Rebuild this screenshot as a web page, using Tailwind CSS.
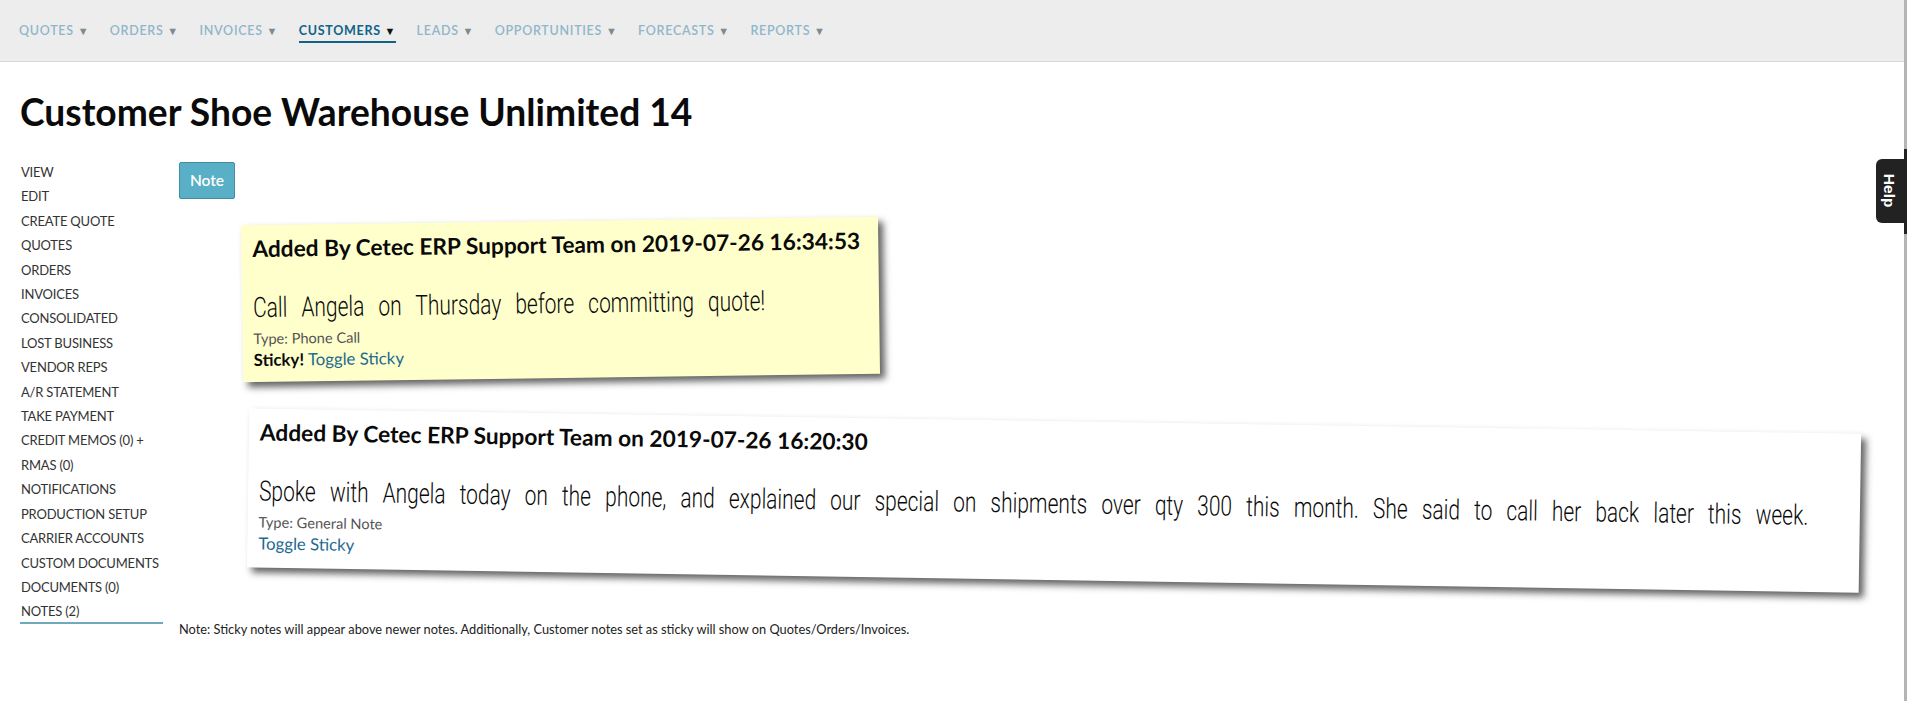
<!DOCTYPE html>
<html lang="en">
<head>
  <meta charset="UTF-8" />
  <meta name="viewport" content="width=device-width, initial-scale=1.0" />
  <title>Customer Shoe Warehouse Unlimited 14</title>
  <script src="https://cdn.jsdelivr.net/npm/@tailwindcss/browser@4"></script>
</head>
<body class="bg-white text-[#0a0a0a] font-['Lato','Noto_Sans',sans-serif] h-[701px] overflow-hidden relative">

  <header class="h-[62px] bg-[#ededed] border-b border-[#d8d8d8] flex items-start gap-[20.5px] pl-[19px] pt-[22px] text-[12.5px] font-semibold tracking-[0.72px] text-[#8fb6ca]">
    <a class="h-[21px]">QUOTES <span class="text-[#7d8a92] text-[11px]">▼</span></a>
    <a class="h-[21px]">ORDERS <span class="text-[#7d8a92] text-[11px]">▼</span></a>
    <a class="h-[21px]">INVOICES <span class="text-[#7d8a92] text-[11px]">▼</span></a>
    <a class="h-[21px] text-[#0f6488] font-bold border-b-2 border-[#0f6488]">CUSTOMERS <span class="text-[#111] text-[11px]">▼</span></a>
    <a class="h-[21px]">LEADS <span class="text-[#7d8a92] text-[11px]">▼</span></a>
    <a class="h-[21px]">OPPORTUNITIES <span class="text-[#7d8a92] text-[11px]">▼</span></a>
    <a class="h-[21px]">FORECASTS <span class="text-[#7d8a92] text-[11px]">▼</span></a>
    <a class="h-[21px]">REPORTS <span class="text-[#7d8a92] text-[11px]">▼</span></a>
  </header>

  <h1 class="ml-[20px] mt-[27px] text-[37.2px] leading-[46px] font-bold">Customer Shoe Warehouse Unlimited 14</h1>

  <div class="flex mt-[27px] ml-[20px]">
    <nav class="w-[163px] shrink-0 flex flex-col text-[13px] tracking-[-0.2px] leading-[24.4px] text-[#333] mt-[-2px] whitespace-nowrap">
      <a class="pl-px">VIEW</a>
      <a class="pl-px">EDIT</a>
      <a class="pl-px">CREATE QUOTE</a>
      <a class="pl-px">QUOTES</a>
      <a class="pl-px">ORDERS</a>
      <a class="pl-px">INVOICES</a>
      <a class="pl-px">CONSOLIDATED</a>
      <a class="pl-px">LOST BUSINESS</a>
      <a class="pl-px">VENDOR REPS</a>
      <a class="pl-px">A/R STATEMENT</a>
      <a class="pl-px">TAKE PAYMENT</a>
      <a class="pl-px">CREDIT MEMOS (0) +</a>
      <a class="pl-px">RMAS (0)</a>
      <a class="pl-px">NOTIFICATIONS</a>
      <a class="pl-px">PRODUCTION SETUP</a>
      <a class="pl-px">CARRIER ACCOUNTS</a>
      <a class="pl-px">CUSTOM DOCUMENTS</a>
      <a class="pl-px">DOCUMENTS (0)</a>
      <a class="pl-px border-b-2 border-[#6fa9bd] h-[25px] w-[143px]">NOTES (2)</a>
    </nav>

    <main class="ml-[-4px] flex-1 flex flex-col items-start">
      <button class="w-[56px] h-[37px] bg-[#58afc6] border border-[#3f8ea6] rounded-[2px] text-white text-[15.5px] font-semibold">Note</button>

      <section class="ml-[63px] mt-[22px] w-[637px] h-[157px] bg-[#ffffcc] rotate-[-0.76deg] shadow-[5px_5px_7px_rgba(33,33,33,0.7)] pl-[11px] pt-[8px]">
        <h3 class="text-[22.7px] leading-[32px] font-bold">Added By Cetec ERP Support Team on 2019-07-26 16:34:53</h3>
        <p class="mt-[27px] h-[36px] text-[28px] leading-[32px] font-['Roboto',sans-serif] font-light [word-spacing:12px] whitespace-nowrap origin-left scale-x-[0.748]">Call Angela on Thursday before committing quote!</p>
        <p class="text-[14.6px] leading-[21px] text-[#555]">Type: Phone Call</p>
        <p class="text-[16.8px] leading-[21px]"><b>Sticky!</b> <a class="text-[#1d6a8f]">Toggle Sticky</a></p>
      </section>

      <section class="ml-[69px] mt-[43px] w-[1612px] h-[159px] bg-white rotate-[0.9deg] shadow-[5px_5px_7px_rgba(33,33,33,0.7)] pl-[11px] pt-[8px]">
        <h3 class="text-[22.7px] leading-[32px] font-bold">Added By Cetec ERP Support Team on 2019-07-26 16:20:30</h3>
        <p class="mt-[27px] h-[36px] text-[28px] leading-[32px] font-['Roboto',sans-serif] font-light [word-spacing:12px] whitespace-nowrap origin-left scale-x-[0.748]">Spoke with Angela today on the phone, and explained our special on shipments over qty 300 this month. She said to call her back later this week.</p>
        <p class="text-[14.6px] leading-[21px] text-[#555]">Type: General Note</p>
        <p class="text-[16.8px] leading-[21px]"><a class="text-[#1d6a8f]">Toggle Sticky</a></p>
      </section>

      <p class="mt-[40px] text-[12.8px] leading-[18px] text-[#222]">Note: Sticky notes will appear above newer notes. Additionally, Customer notes set as sticky will show on Quotes/Orders/Invoices.</p>
    </main>
  </div>

  <div class="absolute right-0 top-0 w-[3px] h-full bg-[#b5b5b5]"></div>
  <div class="absolute right-0 top-[149px] w-[3px] h-[85px] bg-[#222]"></div>
  <div class="absolute right-[3px] top-[159px] w-[28px] h-[64px] bg-[#222] rounded-l-[6px] flex items-center justify-center">
    <span class="rotate-90 text-white text-[15.5px] font-bold font-['Liberation_Sans',sans-serif]">Help</span>
  </div>

</body>
</html>
